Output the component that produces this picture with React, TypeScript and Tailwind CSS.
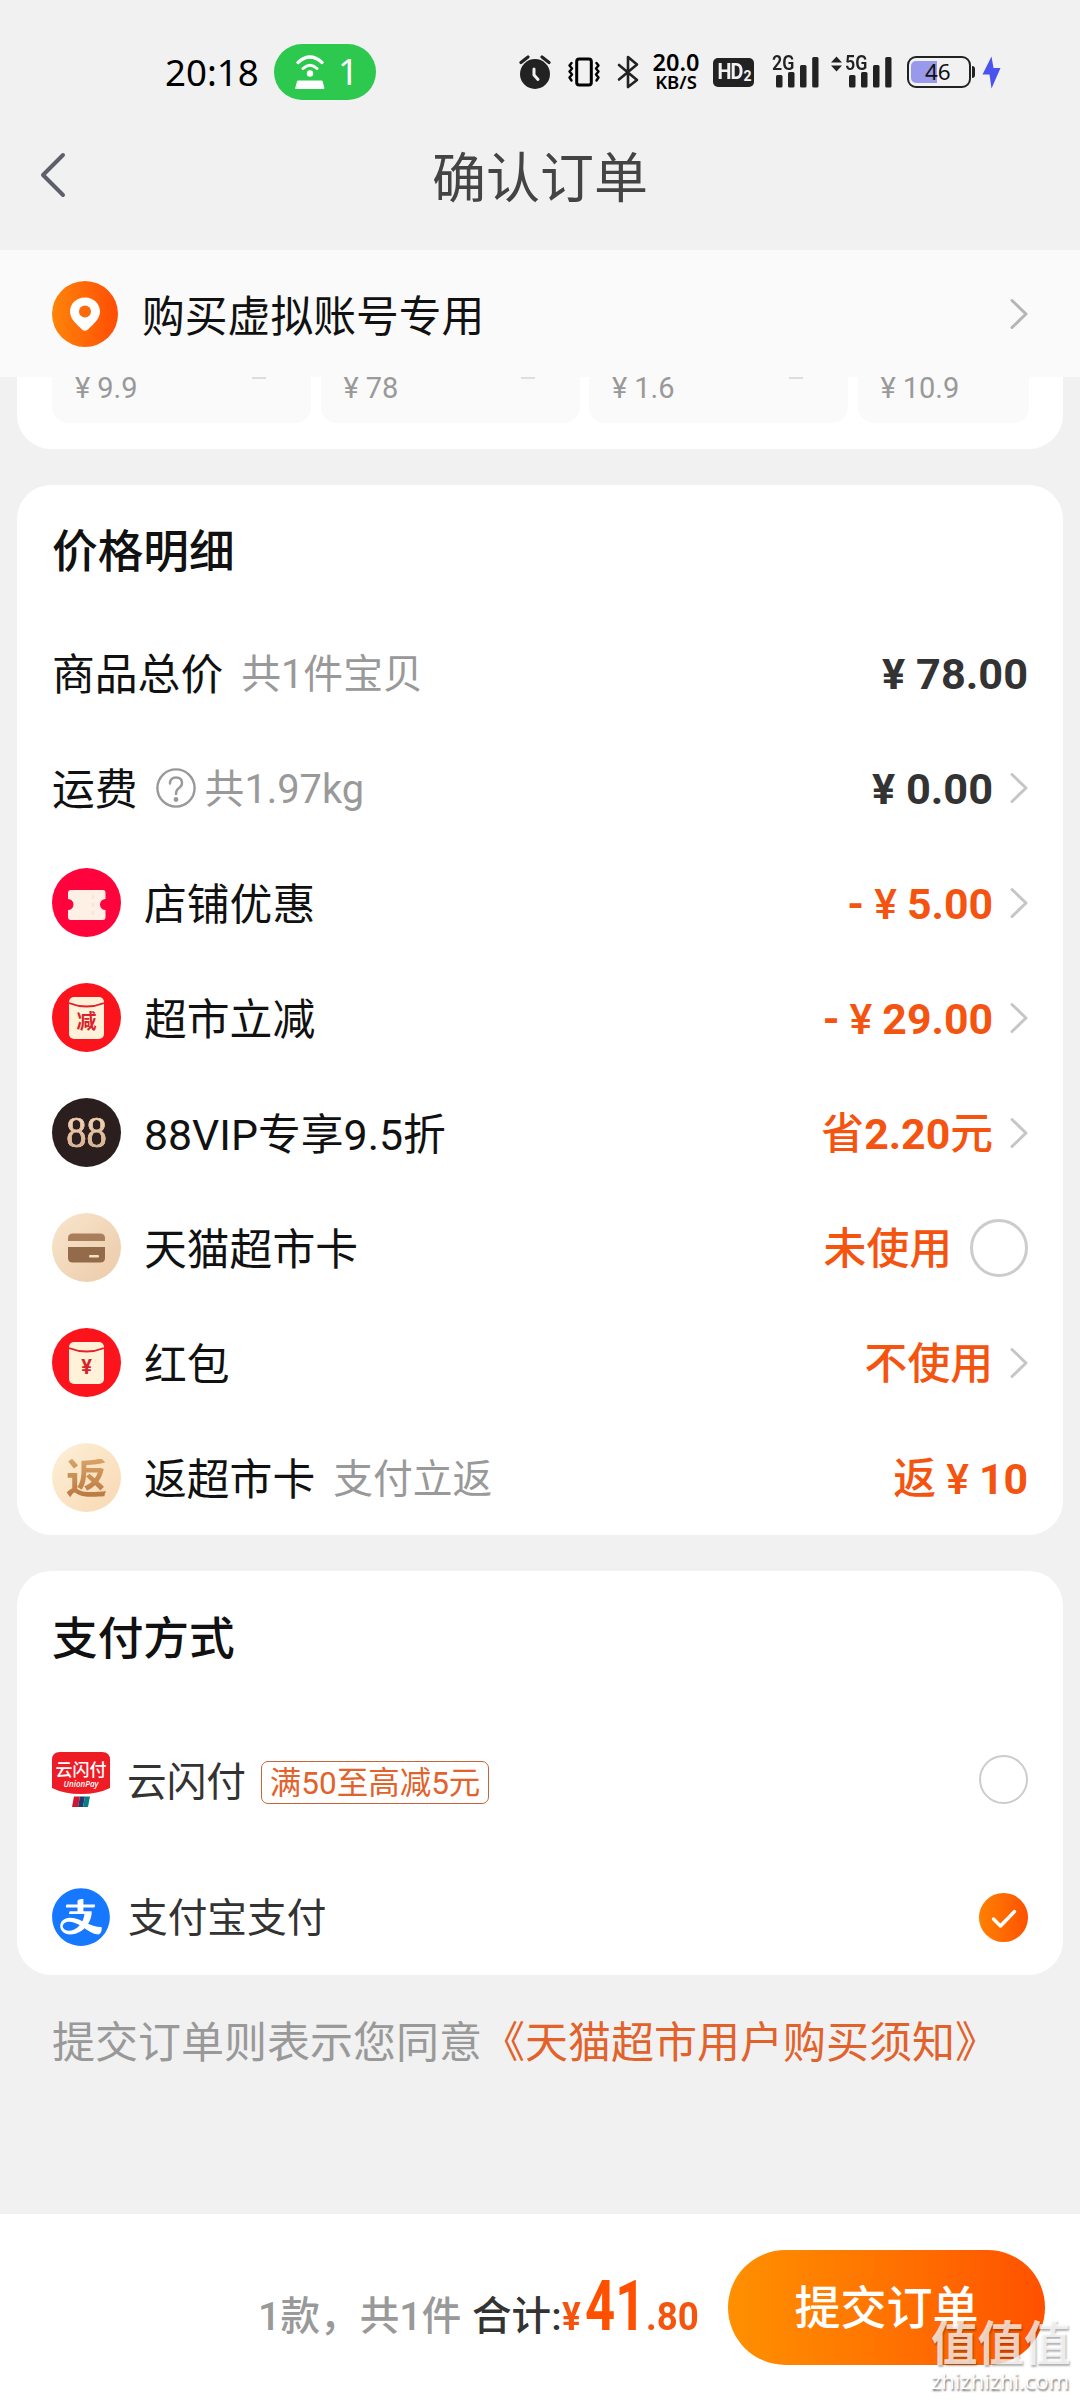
import React from 'react';
import { AiFillAlipayCircle } from 'react-icons/ai';

const Chevron = ({ className = 'text-[#c6c6c6]' }: { className?: string }) => (
  <svg className={className} width="18" height="32" viewBox="0 0 18 32" fill="none" stroke="currentColor" strokeWidth="3" strokeLinecap="round" strokeLinejoin="round">
    <path d="M2 2.5 L16 16 L2 29.5" />
  </svg>
);

const Bars = () => (
  <svg width="43" height="32" viewBox="0 0 43 32" fill="#222">
    <rect x="0" y="19" width="6.5" height="12.5" rx="1.5" />
    <rect x="12" y="16" width="6.5" height="15.5" rx="1.5" />
    <rect x="24" y="9" width="6.5" height="22.5" rx="1.5" />
    <rect x="36.2" y="1" width="6.3" height="30.5" rx="1.5" />
  </svg>
);

const StatusBar = () => (
  <div className="flex h-[144px] items-center pl-[165px] text-black">
    <span className="w-[109px] font-['Noto_Sans',sans-serif] text-[36.7px] leading-none">20:18</span>
    <div className="flex h-[56px] w-[102px] items-center rounded-full bg-[#2dc84e] pl-[21px] text-white">
      <svg width="30" height="34" viewBox="0 0 30 34" fill="none" stroke="currentColor" strokeLinecap="round">
        <path d="M3 7.5 Q15 -3.5 27 7.5" strokeWidth="3.2" />
        <path d="M8 13.5 Q15 7 22 13.5" strokeWidth="3" />
        <circle cx="15" cy="18.5" r="3.2" fill="currentColor" stroke="none" />
        <path d="M3 26 H27 L29 33.5 H1 Z" fill="currentColor" stroke="currentColor" strokeWidth="1" />
      </svg>
      <span className="ml-[13px] font-['Noto_Sans',sans-serif] text-[36px] leading-none">1</span>
    </div>
    {/* Alarm */}
    <svg className="ml-[143px]" width="32" height="34" viewBox="0 0 32 34" fill="none">
      <circle cx="16" cy="19" r="15" fill="#222" />
      <path d="M2 7.5 L9 2 M30 7.5 L23 2" stroke="#222" strokeWidth="3.2" strokeLinecap="round" />
      <path d="M15 14 V20 L19 24.5" stroke="#f2f2f2" strokeWidth="3" strokeLinecap="round" />
    </svg>
    {/* Vibrate */}
    <svg className="ml-[17px]" width="32" height="30" viewBox="0 0 32 30" fill="none" stroke="#000" strokeLinejoin="round" strokeLinecap="round">
      <rect x="8.7" y="2" width="14.6" height="26" rx="2.5" strokeWidth="3" />
      <path d="M3.5 6 L1.5 8.5 L4 11.5 L1.5 14.5 L4 17.5 L1.5 20.5 L3.5 23.5" strokeWidth="2.4" />
      <path d="M28.5 6 L30.5 8.5 L28 11.5 L30.5 14.5 L28 17.5 L30.5 20.5 L28.5 23.5" strokeWidth="2.4" />
    </svg>
    {/* Bluetooth */}
    <svg className="ml-[17px]" width="22" height="34" viewBox="0 0 22 34" fill="none" stroke="#222" strokeWidth="2.6" strokeLinejoin="round" strokeLinecap="round">
      <path d="M2 10 L20 25 L11 32 V2 L20 9.5 L2 24.5" />
    </svg>
    <div className="ml-[11px] flex w-[52px] flex-col items-center font-['Noto_Sans',sans-serif] font-semibold leading-none">
      <span className="text-[23.5px] leading-[19px]">20.0</span>
      <span className="text-[18.5px] leading-[19px]">KB/S</span>
    </div>
    <div className="ml-[11px] flex h-[29px] w-[41px] items-center justify-center rounded-[5px] bg-[#222] font-['Roboto',sans-serif] font-bold leading-none text-[#f2f2f2]">
      <span className="scale-x-90 text-[22px] tracking-[-1px]">HD</span>
      <span className="mt-2 text-[14px]">2</span>
    </div>
    <div className="relative ml-[22px]">
      <Bars />
      <span className="absolute -left-1 -top-px origin-left scale-x-85 bg-[#f1f1f1] font-['Roboto',sans-serif] text-[21px] font-semibold leading-[16px] text-[#222]">2G</span>
    </div>
    <svg className="mb-4 ml-[12px]" width="11" height="16" viewBox="0 0 11 16" fill="#222">
      <path d="M0 6.5 L5.5 0.5 L11 6.5 Z M0 9.5 L5.5 15.5 L11 9.5 Z" />
    </svg>
    <div className="relative ml-[7px]">
      <Bars />
      <span className="absolute -left-1 -top-px origin-left scale-x-85 bg-[#f1f1f1] font-['Roboto',sans-serif] text-[21px] font-semibold leading-[16px] text-[#222]">5G</span>
    </div>
    {/* Battery */}
    <div className="relative ml-[15px] flex h-[32px] w-[64px] items-center rounded-[9px] border-[2.5px] border-[#222] pl-[2px]">
      <div className="h-[22px] w-[26px] rounded-l-[5px] bg-[#9899ea]" />
      <span className="absolute left-[16px] font-['Noto_Sans',sans-serif] text-[22.5px] leading-none text-[#111]">46</span>
    </div>
    <div className="ml-[1px] h-[12px] w-[3px] rounded-r bg-[#222]" />
    <svg className="ml-[7px]" width="19" height="33" viewBox="0 0 19 33" fill="#4a53ee">
      <path d="M9.5 0.5 L0.5 18.5 H7.5 L9.5 32.5 L18.5 12 H11.5 Z" />
    </svg>
  </div>
);

// Digits are set heavier than the characters and the yuan sign around them
const Amount = ({ text }: { text: string }) => (
  <span className="mt-[3px] flex h-[43px] items-baseline font-medium text-[#f4540f]">
    {text.split(/(¥)|([-\d.]+)/).filter(Boolean).map((part, i) => {
      if (part === '¥') return <span key={i} className="mx-[10px]">¥</span>;
      if (/\d|-/.test(part)) return <span key={i} className="font-bold">{part}</span>;
      return <span key={i}>{part}</span>;
    })}
  </span>
);

const goods = [
  { price: '9.9', className: 'w-[259px]', dash: true },
  { price: '78', className: 'w-[259px]', dash: true },
  { price: '1.6', className: 'w-[259px]', dash: true },
  { price: '10.9', className: 'w-[171px]', dash: false },
];

const Packet = ({ label }: { label: string }) => (
  <span className="flex size-[69px] items-center justify-center rounded-full bg-[#fc141c]">
    <span className="relative flex h-[42px] w-[35px] items-center justify-center overflow-hidden rounded-[5px] bg-[#fff2d8] pt-[8px]">
      <svg className="absolute left-0 top-0" width="35" height="12" viewBox="0 0 35 12" fill="none" stroke="#e3202a" strokeWidth="1.8">
        <path d="M0 6 Q17.5 13 35 6" />
      </svg>
      <span className="text-[20px] font-bold leading-none text-[#d8232b]">{label}</span>
    </span>
  </span>
);

const TicketIcon = () => (
  <svg width="69" height="69" viewBox="0 0 69 69">
    <circle cx="34.5" cy="34.5" r="34.5" fill="#ff043c" />
    <path d="M19 22 H51 Q53.5 22 53.5 25 V31 A5 5 0 0 0 53.5 42 V49 Q53.5 52 51 52 H19 Q16 52 16 49 V42 A5 5 0 0 0 16 31 V25 Q16 22 19 22 Z" fill="#fff0e6" />
    <path d="M41 27 V48" stroke="#fae3d8" strokeWidth="2.5" strokeDasharray="4 4" />
  </svg>
);

const VipIcon = () => (
  <span className="flex size-[69px] items-center justify-center rounded-full bg-[#2a1f1e]">
    <span className="scale-x-90 bg-gradient-to-b from-[#fbe0c4] to-[#d0a582] bg-clip-text font-['Liberation_Serif',serif] text-[45px] leading-none text-transparent [-webkit-text-stroke:0.6px_#e8c6a6]">88</span>
  </span>
);

const CardIcon = () => (
  <span className="flex size-[69px] items-center justify-center rounded-full bg-gradient-to-br from-[#f8e6cd] to-[#eccaa8]">
    <svg width="37" height="30" viewBox="0 0 37 30">
      <path d="M0 8 V5 Q0 0.5 5 0.5 H32 Q37 0.5 37 5 V8 Z" fill="#a87e5c" />
      <path d="M0 14 H37 V25 Q37 29.5 32 29.5 H5 Q0 29.5 0 25 Z" fill="#936b4b" />
      <rect x="21" y="22" width="10" height="2.6" rx="1" fill="#f6e0c4" />
    </svg>
  </span>
);

const ReturnIcon = () => (
  <span className="flex size-[69px] items-center justify-center rounded-full bg-gradient-to-br from-[#fdf0d8] to-[#f8d8b2]">
    <span className="mt-[3px] bg-gradient-to-b from-[#d9a266] to-[#b87640] bg-clip-text text-[41px] font-bold leading-none text-transparent">返</span>
  </span>
);

const rows = [
  { icon: <TicketIcon />, label: '店铺优惠', value: '-¥5.00', end: 'arrow' },
  { icon: <Packet label="减" />, label: '超市立减', value: '-¥29.00', end: 'arrow' },
  { icon: <VipIcon />, label: '88VIP专享9.5折', value: '省2.20元', end: 'arrow' },
  { icon: <CardIcon />, label: '天猫超市卡', value: '未使用', end: 'radio' },
  { icon: <Packet label="¥" />, label: '红包', value: '不使用', end: 'arrow' },
  { icon: <ReturnIcon />, label: '返超市卡', note: '支付立返', value: '返¥10', end: 'none' },
];

const UnionPayIcon = () => (
  <div className="relative h-[55px] w-[58px]">
    <svg width="58" height="55" viewBox="0 0 58 55">
      <path d="M8 0 H50 Q58 0 58 8 V36 Q46 42 29 42 Q12 42 0 36 V8 Q0 0 8 0 Z" fill="#ee1c25" />
      <path d="M22 44.5 H28 L26 55 H20 Z" fill="#d5152f" />
      <path d="M28 44.5 H33 L31 55 H26 Z" fill="#1d3b6e" />
      <path d="M33 44.5 H38 L36 55 H31 Z" fill="#0a7d84" />
    </svg>
    <div className="absolute inset-x-0 top-[9px] flex flex-col items-center leading-none text-white">
      <span className="text-[17px] font-medium leading-[18px]">云闪付</span>
      <span className="font-['Open_Sans',sans-serif] text-[8px] font-semibold italic leading-[9px]">UnionPay</span>
    </div>
  </div>
);

export default function App() {
  return (
    <div className="flex h-[2400px] w-[1080px] flex-col overflow-hidden bg-[#f1f1f1] font-['Roboto','Noto_Sans_CJK_SC',sans-serif] text-[42.8px] leading-none text-[#111]">
      <StatusBar />

      {/* Title bar */}
      <header className="flex h-[106px] items-center bg-[#f1f1f1] pb-[44px] pl-[40px]">
        <svg width="26" height="46" viewBox="0 0 26 46" fill="none" stroke="#5d606b" strokeWidth="4" strokeLinecap="round" strokeLinejoin="round">
          <path d="M23 3 L3 23 L23 43" />
        </svg>
        <h1 className="ml-[366px] mt-[9px] text-[54px] text-[#444]">确认订单</h1>
      </header>

      {/* Address */}
      <section className="flex h-[127px] shrink-0 items-center bg-[#fafafa] pl-[52px] pr-[52px]">
        <svg width="66" height="66" viewBox="0 0 66 66">
          <defs>
            <linearGradient id="pin" x1="0" y1="0" x2="1" y2="0">
              <stop offset="0" stopColor="#ff8409" />
              <stop offset="1" stopColor="#ff4d05" />
            </linearGradient>
          </defs>
          <circle cx="33" cy="33" r="33" fill="url(#pin)" />
          <path d="M33 16.5 C24 16.5 18 23 18 30.5 C18 38 25 43.5 30 48.5 Q33 51 36 48.5 C41 43.5 48 38 48 30.5 C48 23 42 16.5 33 16.5 Z" fill="#fff" />
          <circle cx="33" cy="30.5" r="6" fill="#fb6a0b" />
        </svg>
        <span className="ml-[24px] mt-[8px] flex-1">购买虚拟账号专用</span>
        <Chevron className="text-[#b5b5b5]" />
      </section>

      {/* Goods strip, scrolled under the address */}
      <section className="mx-[17px] flex h-[72px] shrink-0 gap-[9.5px] rounded-b-[34px] bg-white pl-[35px]">
        {goods.map((item) => (
          <div key={item.price} className={`relative flex h-[46px] rounded-b-[16px] bg-[#fafafa] pl-[23px] text-[29px] leading-[22px] text-[#999] ${item.className}`}>
            <span className="mr-[7px]">¥</span>
            <span>{item.price}</span>
            {item.dash && <i className="absolute right-[45px] top-0 h-[2px] w-[14px] bg-[#ddd]" />}
          </div>
        ))}
      </section>

      {/* Price detail */}
      <section className="mx-[17px] mt-[36px] flex h-[1050px] shrink-0 flex-col rounded-[34px] bg-white pl-[35px] pr-[35px]">
        <h2 className="flex h-[130px] shrink-0 items-center pt-[6px] text-[45.7px] font-medium">价格明细</h2>
        <div className="flex h-[115px] shrink-0 items-center">
          <span className="mt-[5px]">商品总价</span>
          <span className="ml-[18px] mt-[5px] flex-1 text-[39.8px] text-[#999]">共1件宝贝</span>
          <span className="mt-[4px] text-[43.3px] font-bold text-[#333]">¥ 78.00</span>
        </div>
        <div className="flex h-[115px] shrink-0 items-center">
          <span className="mt-[5px]">运费</span>
          <svg className="ml-[18px]" width="40" height="40" viewBox="0 0 40 40" fill="none" stroke="#999" strokeWidth="2.4" strokeLinecap="round">
            <circle cx="20" cy="20" r="18.6" />
            <path d="M14 15.5 Q14 9.5 20 9.5 Q26 9.5 26 15 Q26 18 23 20 Q20 22 20 26" />
            <circle cx="20" cy="31.5" r="1.2" fill="#999" />
          </svg>
          <span className="ml-[9px] mt-[5px] flex-1 text-[39.8px] text-[#999]">共1.97kg</span>
          <span className="mr-[17px] mt-[4px] text-[43.3px] font-bold text-[#333]">¥ 0.00</span>
          <Chevron />
        </div>
        {rows.map((row) => (
          <div key={row.label} className="flex h-[115px] shrink-0 items-center">
            {row.icon}
            <span className="ml-[23px] mt-[5px]">{row.label}</span>
            <span className="ml-[18px] mt-[5px] flex-1 text-[39.8px] text-[#999]">{row.note}</span>
            <Amount text={row.value} />
            {row.end === 'arrow' && <Chevron className="ml-[17px] text-[#c6c6c6]" />}
            {row.end === 'radio' && <i className="ml-[18px] size-[58px] rounded-full border-3 border-[#ccc]" />}
          </div>
        ))}
      </section>

      {/* Payment */}
      <section className="mx-[17px] mt-[36px] flex h-[404px] shrink-0 flex-col rounded-[34px] bg-white pl-[35px] pr-[35px] text-[39.7px] text-[#333]">
        <h2 className="flex h-[139px] shrink-0 items-center pb-[2px] text-[45.7px] font-medium text-[#111]">支付方式</h2>
        <div className="flex h-[138px] shrink-0 items-center">
          <UnionPayIcon />
          <span className="ml-[17px] mt-[8px]">云闪付</span>
          <span className="ml-[15px] mt-[6px] flex h-[43px] w-[228px] items-center justify-center whitespace-nowrap rounded-[7px] border border-[#c8643c] pt-[3px] text-[31.5px] text-[#e2622b]">满50至高减5元</span>
          <i className="ml-auto size-[49px] rounded-full border-[2.5px] border-[#ccc]" />
        </div>
        <div className="flex h-[138px] shrink-0 items-center">
          <AiFillAlipayCircle className="-m-[4px] size-[66px] text-[#1677ff]" />
          <span className="ml-[20px] mt-[4px] -translate-x-[2px]">支付宝支付</span>
          <span className="ml-auto flex size-[49px] items-center justify-center rounded-full bg-gradient-to-r from-[#ff8000] to-[#ff5000]">
            <svg className="mt-[3px]" width="26" height="20" viewBox="0 0 26 20" fill="none" stroke="#fff" strokeWidth="3.4" strokeLinecap="round" strokeLinejoin="round">
              <path d="M2.5 10 L9.5 17 L23.5 2.5" />
            </svg>
          </span>
        </div>
      </section>

      <p className="flex h-[136px] shrink-0 items-center pl-[52px] pt-px text-[43px] text-[#999]">
        提交订单则表示您同意<span className="text-[#e2622b]">《天猫超市用户购买须知》</span>
      </p>

      {/* Submit bar */}
      <footer className="relative mt-auto flex h-[186px] shrink-0 items-center bg-white">
        <div className="flex items-baseline whitespace-nowrap pb-[4px] pl-[258px] text-[39.6px] font-medium">
          <span className="w-[214px] text-[#999]">1款，共1件</span>
          <span className="w-[90px] text-[#333]">合计:</span>
          <span className="w-[23px] origin-left scale-x-90 text-[39px] font-bold text-[#f5540f]">¥</span>
          <span className="w-[61px] origin-left scale-x-[0.74] text-[71px] font-bold text-[#ff5000]">41</span>
          <span className="w-[82px] origin-left scale-x-[0.94] text-[39px] font-bold text-[#f5540f]">.80</span>
        </div>
        <button className="h-[115px] w-[317px] rounded-full bg-gradient-to-r from-[#ff9000] to-[#ff5000] pt-[2px] text-[46px] font-medium text-white">提交订单</button>
        <div className="absolute right-[9px] top-[107px] flex w-[140px] flex-col text-white/75">
          <span className="text-[46.5px] font-bold leading-[46px] [text-shadow:1px_2px_2px_rgb(0_0_0/0.3)]">值值值</span>
          <span className="font-['Open_Sans',sans-serif] text-[22px] leading-[26px] text-white [text-shadow:1px_2px_2px_rgb(0_0_0/0.55)]">zhizhizhi.com</span>
        </div>
      </footer>
    </div>
  );
}
